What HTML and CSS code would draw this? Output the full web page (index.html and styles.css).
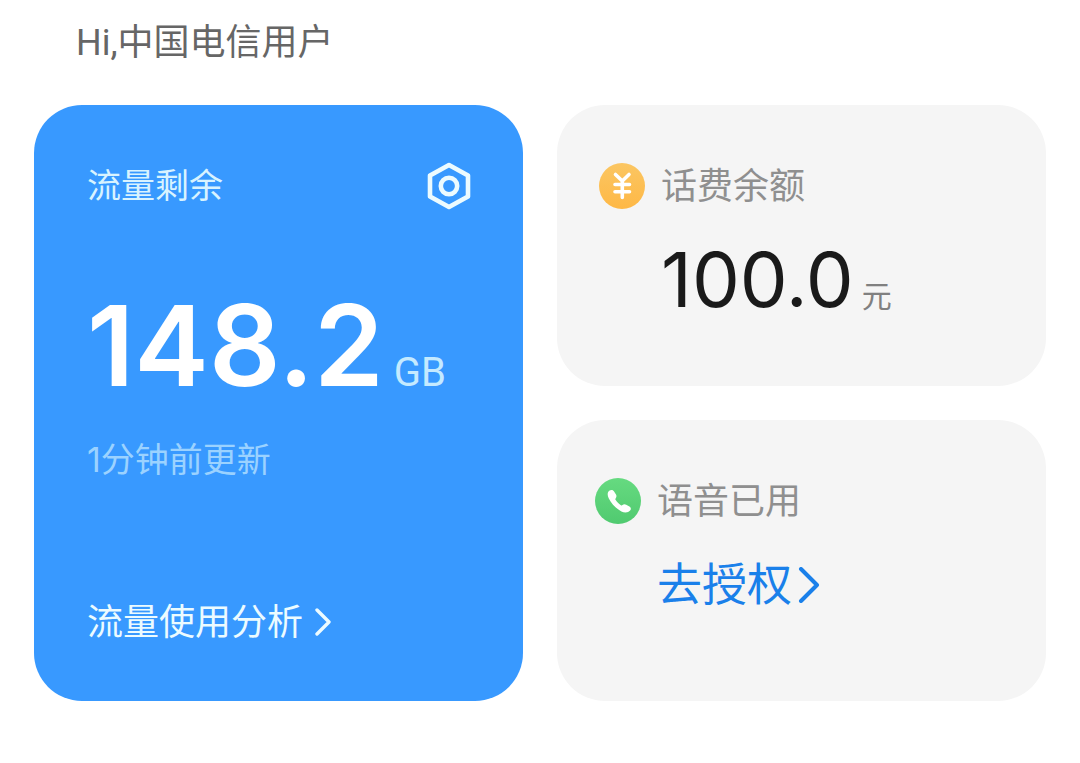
FILE: index.html
```html
<!DOCTYPE html>
<html lang="zh-CN">
<head>
    <meta charset="UTF-8">
    <meta name="viewport" content="width=device-width, initial-scale=1.0">
    <title>中国电信</title>
    <link rel="stylesheet" href="styles.css">
</head>
<body>
    <h1 class="greeting">Hi,中国电信用户</h1>
    <main class="cards">
        <section class="card data-card">
            <div class="data-header">
                <h2 class="data-title">流量剩余</h2>
                <button class="settings" type="button" aria-label="设置">
                    <svg width="44" height="48" viewBox="0 0 44 48" fill="none" stroke="currentColor" stroke-width="4.6" stroke-linejoin="round">
                        <path d="M22 3 L41 13.4 V34.6 L22 45 L3 34.6 V13.4 Z"/>
                        <circle cx="22" cy="24" r="8.2"/>
                    </svg>
                </button>
            </div>
            <p class="data-amount">148.2<span class="data-unit">GB</span></p>
            <p class="updated">1分钟前更新</p>
            <a class="data-link" href="#">流量使用分析
                <svg width="16" height="28" viewBox="0 0 16 28" fill="none" stroke="currentColor" stroke-width="3.4" stroke-linecap="round" stroke-linejoin="round">
                    <path d="M2 2 L14 14 L2 26"/>
                </svg>
            </a>
        </section>
        <div class="side">
            <section class="card side-card">
                <svg class="side-icon" viewBox="0 0 46 46">
                    <defs>
                        <linearGradient id="gold" x1="0" y1="0" x2="0" y2="1">
                            <stop offset="0" stop-color="#fbc662"/>
                            <stop offset="1" stop-color="#feb846"/>
                        </linearGradient>
                    </defs>
                    <circle cx="23" cy="23" r="23" fill="url(#gold)"/>
                    <path d="M16.5 11.5 L23.3 18 L30 11.5 M23.3 18 V34.5 M16 21.5 H30.5 M16 28.8 H30.5" fill="none" stroke="#fff" stroke-width="3.6" stroke-linecap="round" stroke-linejoin="round"/>
                </svg>
                <h2 class="side-title">话费余额</h2>
                <p class="balance">100.0<span class="balance-unit">元</span></p>
            </section>
            <section class="card side-card voice-card">
                <svg class="side-icon" viewBox="0 0 46 46">
                    <defs>
                        <linearGradient id="green" x1="0" y1="0" x2="0" y2="1">
                            <stop offset="0" stop-color="#66da80"/>
                            <stop offset="1" stop-color="#50ca70"/>
                        </linearGradient>
                    </defs>
                    <circle cx="23" cy="23" r="23" fill="url(#green)"/>
                    <path d="M14.2 12.8 C15.8 11.6 17.8 11.7 18.9 13.3 L21 16.6 C21.8 18 21.5 19.2 20.6 20.4 C20.2 21 20.3 21.5 20.7 22.1 C22.1 24.3 23.6 25.8 25.9 27.3 C26.5 27.7 27 27.6 27.5 27.1 C28.5 26 29.8 25.9 31.2 26.7 L34.4 28.6 C36.2 29.8 36.2 31.3 35.1 32.6 C33.2 34.8 29.5 35.1 26.4 33.4 C20.8 30.4 16.2 25.6 13.7 20.2 C12.3 17.2 12.2 14.5 14.2 12.8 Z" fill="#fff"/>
                </svg>
                <h2 class="side-title">语音已用</h2>
                <a class="authorize" href="#">去授权
                    <svg width="22" height="36" viewBox="0 0 22 36" fill="none" stroke="currentColor" stroke-width="4" stroke-linecap="round" stroke-linejoin="round">
                        <path d="M3 2 L19 18 L3 34"/>
                    </svg>
                </a>
            </section>
        </div>
    </main>
</body>
</html>
```
FILE: styles.css
```css
* {
    box-sizing: border-box;
}
body {
    margin: 0;
    padding: 16px 34px 62px;
    background-color: #fff;
    font-family: Inter, 'Noto Sans CJK SC', sans-serif;
}
h1, h2, p {
    margin: 0;
    font-weight: 400;
}
a {
    text-decoration: none;
}
.greeting {
    padding-left: 42px;
    font-family: Roboto, 'Noto Sans CJK SC', sans-serif;
    font-size: 36px;
    line-height: 54px;
    color: #666;
}
.cards {
    display: grid;
    grid-template-columns: 1fr 1fr;
    gap: 34px;
    margin-top: 35px;
}
.card {
    border-radius: 48px;
}
.data-card {
    display: flex;
    flex-direction: column;
    align-items: flex-start;
    padding: 54px 52px 52px 53px;
    background-color: #3899ff;
    color: #fff;
}
.data-header {
    display: flex;
    justify-content: space-between;
    align-items: center;
    width: 100%;
}
.data-title {
    font-size: 34px;
    line-height: 54px;
    color: #d8f3ff;
}
.settings {
    display: flex;
    padding: 0;
    border: none;
    background: none;
    color: #ecfbff;
    cursor: pointer;
}
.data-amount {
    display: flex;
    align-items: baseline;
    gap: 10px;
    margin-top: 62px;
    font-size: 112px;
    font-weight: 600;
    line-height: 140px;
    white-space: nowrap;
}
.data-unit {
    font-family: Roboto, sans-serif;
    font-size: 40px;
    font-weight: 400;
    line-height: 54px;
    color: #c4eaff;
}
.updated {
    margin-top: 18px;
    font-size: 34px;
    line-height: 54px;
    color: #9bd2ff;
}
.data-link {
    display: flex;
    align-items: center;
    gap: 12px;
    margin-top: auto;
    font-size: 36px;
    line-height: 54px;
    color: #ecfbff;
}
.side {
    display: grid;
    gap: 34px;
}
.side-card {
    display: grid;
    grid-template-columns: 46px 1fr;
    align-content: start;
    align-items: center;
    column-gap: 16px;
    min-height: 281px;
    padding: 54px 42px;
    background-color: #f5f5f5;
}
.voice-card {
    padding-left: 38px;
}
.side-icon {
    width: 46px;
    height: 46px;
}
.side-title {
    font-size: 36px;
    line-height: 54px;
    color: #8f8f8f;
}
.balance {
    grid-column: 2;
    display: flex;
    align-items: baseline;
    gap: 8px;
    margin-top: 16px;
    font-size: 76px;
    line-height: 100px;
    color: #1a1a1a;
    white-space: nowrap;
}
.balance-unit {
    font-size: 30px;
    line-height: 54px;
    color: #808080;
}
.authorize {
    grid-column: 2;
    display: flex;
    align-items: center;
    gap: 6px;
    margin-top: 24px;
    font-size: 45px;
    line-height: 66px;
    color: #1a80ea;
}
```
